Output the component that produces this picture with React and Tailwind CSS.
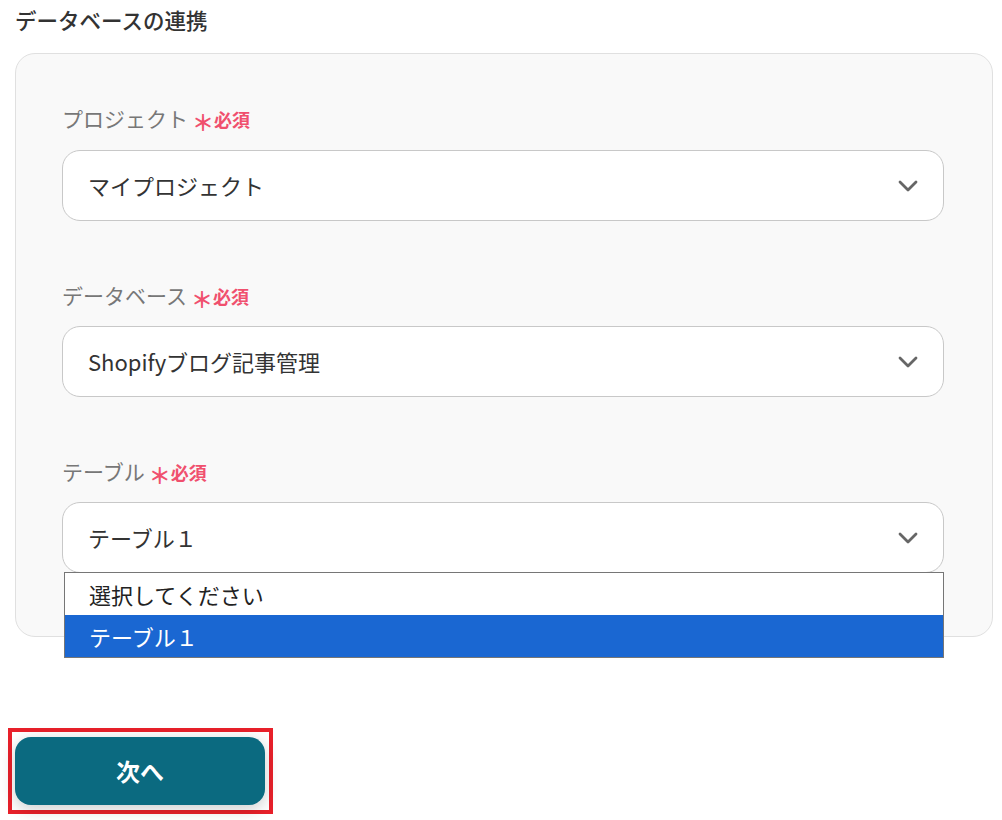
function Label({ text }) {
  return (
    <div className="flex items-center h-[26px]">
      <span className="text-[21px] text-[#777] leading-none">{text}</span>
      <span className="ml-[4px] text-[22px] text-[#f0506e] font-bold leading-none mt-[6px]">＊</span>
      <span className="text-[18px] text-[#f0506e] font-bold leading-none mt-[2px]">必須</span>
    </div>
  );
}

function Chevron() {
  return (
    <svg width="22" height="14" viewBox="0 0 22 14" fill="none">
      <path d="M3 3 L11 11 L19 3" stroke="#666" strokeWidth="2.8" strokeLinecap="round" strokeLinejoin="round" />
    </svg>
  );
}

function SelectBox({ value }) {
  return (
    <div className="h-[71px] bg-white border border-[#c8c8c8] rounded-[18px] flex items-center justify-between pl-[25px] pr-[24px]">
      <span className="text-[22px] text-[#333]">{value}</span>
      <Chevron />
    </div>
  );
}

export default function App() {
  return (
    <div className="w-[1002px] h-[820px] bg-white relative" style={{ fontFamily: '"Noto Sans CJK JP", "Noto Sans", sans-serif' }}>
      <div className="pt-[5px] pl-[15px] text-[21.5px] font-medium text-[#333] leading-[30px]">データベースの連携</div>

      <div className="mt-[18px] ml-[15px] w-[978px] h-[584px] bg-[#f9f9f9] border border-[#e0e0e0] rounded-[20px] pt-[51px] pl-[46px] pr-[48px]">
        <Label text="プロジェクト" />
        <div className="mt-[19px]"><SelectBox value="マイプロジェクト" /></div>

        <div className="mt-[61px]"><Label text="データベース" /></div>
        <div className="mt-[18px]"><SelectBox value="Shopifyブログ記事管理" /></div>

        <div className="mt-[61px]"><Label text="テーブル" /></div>
        <div className="mt-[18px] relative">
          <SelectBox value="テーブル１" />
          <div className="absolute left-[2px] right-0 top-[70px] border border-[#767676] bg-white z-10">
            <div className="h-[42px] flex items-center pl-[24px] text-[22px] text-[#222]">選択してください</div>
            <div className="h-[42px] flex items-center pl-[24px] text-[22px] text-white bg-[#1a67d2]">テーブル１</div>
          </div>
        </div>
      </div>

      <div className="mt-[91px] ml-[8px] w-[265px] h-[86px] border-[4px] border-[#e8202a] p-[5px] pl-[3px]">
        <button className="w-[250px] h-[68px] bg-[#0b6a80] rounded-[16px] text-white text-[24px] font-bold shadow-[0_4px_16px_rgba(0,0,0,0.2)]">次へ</button>
      </div>
    </div>
  );
}
